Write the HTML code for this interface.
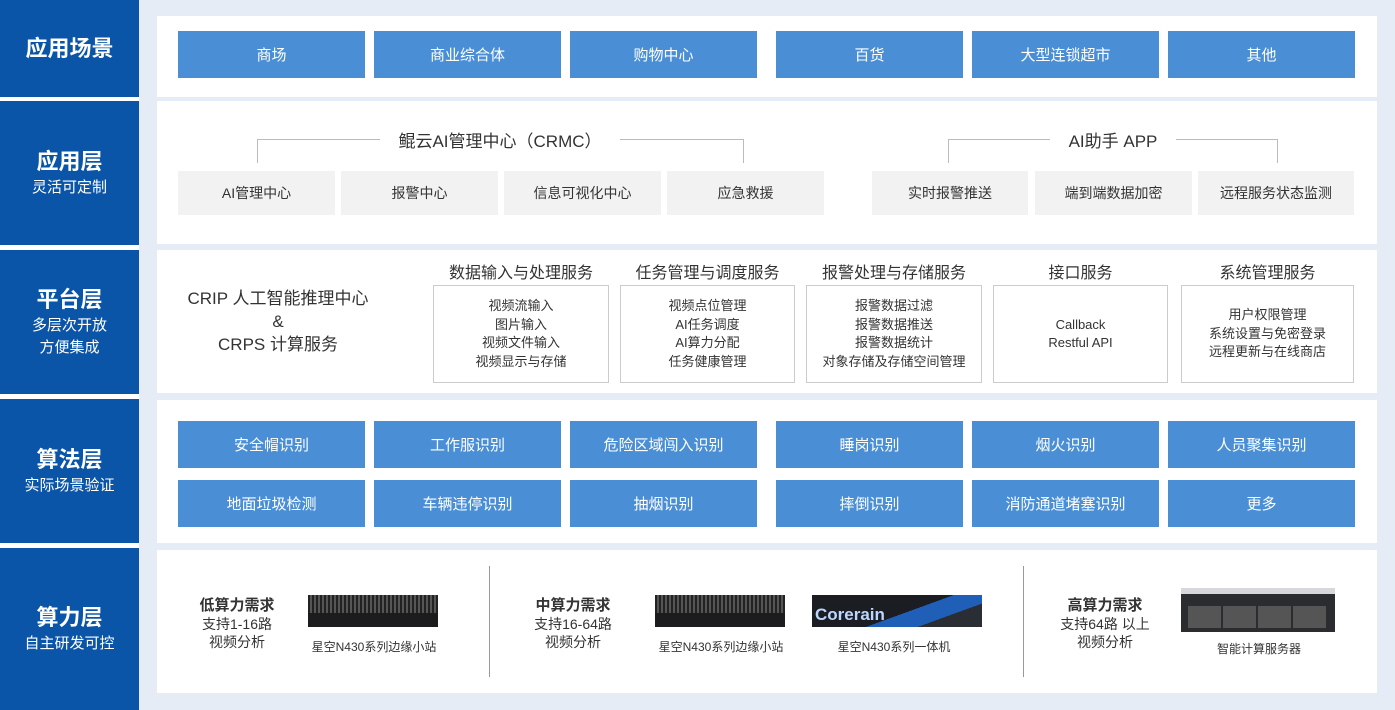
<!DOCTYPE html>
<html><head><meta charset="utf-8"><style>
*{margin:0;padding:0;box-sizing:border-box}
body{width:1395px;height:710px;background:#fff;position:relative;overflow:hidden;font-family:"Liberation Sans","Noto Sans CJK SC",sans-serif;color:#333}
.a{position:absolute}
.bg{left:139px;top:0;width:1256px;height:710px;background:#e5ecf6}
.L{left:0;width:139px;background:#0a55a8;color:#fff;display:flex;flex-direction:column;justify-content:center;align-items:center}
.L b{font-size:22px;line-height:30px}
.L span{font-size:15px;line-height:22px}
.P{background:#fff;left:157px;width:1220px}
.bb{background:#4a8fd6;color:#fff;font-size:15px;display:flex;align-items:center;justify-content:center;height:47px;width:187px}
.gb{background:#f2f2f2;color:#333;font-size:14px;display:flex;align-items:center;justify-content:center;height:44px}
.hd{font-size:16px;text-align:center;color:#333}
.bx{border:1px solid #ccc;top:285px;height:98px;font-size:13px;line-height:18.5px;text-align:center;display:flex;flex-direction:column;justify-content:center}
.br{border:1px solid #bbb;border-bottom:none;height:24px}
.t{font-size:14px;text-align:center;line-height:18px}
.cap{font-size:12px;text-align:center}
</style></head><body>
<div class="a bg"></div>
<div class="a L" style="top:0;height:97px"><b>应用场景</b></div>
<div class="a L" style="top:101px;height:144px"><b>应用层</b><span>灵活可定制</span></div>
<div class="a L" style="top:250px;height:144px"><b>平台层</b><span>多层次开放</span><span>方便集成</span></div>
<div class="a L" style="top:399px;height:144px"><b>算法层</b><span>实际场景验证</span></div>
<div class="a L" style="top:548px;height:162px"><b>算力层</b><span>自主研发可控</span></div>

<div class="a P" style="top:16px;height:81px"></div>
<div class="a bb" style="left:178px;top:31px">商场</div>
<div class="a bb" style="left:374px;top:31px">商业综合体</div>
<div class="a bb" style="left:570px;top:31px">购物中心</div>
<div class="a bb" style="left:776px;top:31px">百货</div>
<div class="a bb" style="left:972px;top:31px">大型连锁超市</div>
<div class="a bb" style="left:1168px;top:31px">其他</div>

<div class="a P" style="top:101px;height:143px"></div>
<div class="a br" style="left:257px;top:139px;width:487px"></div>
<div class="a hd" style="left:380px;top:127px;width:240px;background:#fff;font-size:17px">鲲云AI管理中心（CRMC）</div>
<div class="a br" style="left:948px;top:139px;width:330px"></div>
<div class="a hd" style="left:1050px;top:127px;width:126px;background:#fff;font-size:17px">AI助手 APP</div>
<div class="a gb" style="left:178px;top:171px;width:157px">AI管理中心</div>
<div class="a gb" style="left:341px;top:171px;width:157px">报警中心</div>
<div class="a gb" style="left:504px;top:171px;width:157px">信息可视化中心</div>
<div class="a gb" style="left:667px;top:171px;width:157px">应急救援</div>
<div class="a gb" style="left:872px;top:171px;width:156px">实时报警推送</div>
<div class="a gb" style="left:1035px;top:171px;width:157px">端到端数据加密</div>
<div class="a gb" style="left:1198px;top:171px;width:156px">远程服务状态监测</div>

<div class="a P" style="top:250px;height:143px"></div>
<div class="a" style="left:178px;top:287px;width:200px;text-align:center;font-size:17px;line-height:23px">CRIP 人工智能推理中心<br>&amp;<br>CRPS 计算服务</div>
<div class="a hd" style="left:433px;top:259px;width:176px">数据输入与处理服务</div>
<div class="a hd" style="left:620px;top:259px;width:175px">任务管理与调度服务</div>
<div class="a hd" style="left:806px;top:259px;width:176px">报警处理与存储服务</div>
<div class="a hd" style="left:993px;top:259px;width:175px">接口服务</div>
<div class="a hd" style="left:1181px;top:259px;width:173px">系统管理服务</div>
<div class="a bx" style="left:433px;width:176px">视频流输入<br>图片输入<br>视频文件输入<br>视频显示与存储</div>
<div class="a bx" style="left:620px;width:175px">视频点位管理<br>AI任务调度<br>AI算力分配<br>任务健康管理</div>
<div class="a bx" style="left:806px;width:176px">报警数据过滤<br>报警数据推送<br>报警数据统计<br>对象存储及存储空间管理</div>
<div class="a bx" style="left:993px;width:175px">Callback<br>Restful API</div>
<div class="a bx" style="left:1181px;width:173px">用户权限管理<br>系统设置与免密登录<br>远程更新与在线商店</div>

<div class="a P" style="top:400px;height:143px"></div>
<div class="a bb" style="left:178px;top:421px">安全帽识别</div>
<div class="a bb" style="left:374px;top:421px">工作服识别</div>
<div class="a bb" style="left:570px;top:421px">危险区域闯入识别</div>
<div class="a bb" style="left:776px;top:421px">睡岗识别</div>
<div class="a bb" style="left:972px;top:421px">烟火识别</div>
<div class="a bb" style="left:1168px;top:421px">人员聚集识别</div>
<div class="a bb" style="left:178px;top:480px">地面垃圾检测</div>
<div class="a bb" style="left:374px;top:480px">车辆违停识别</div>
<div class="a bb" style="left:570px;top:480px">抽烟识别</div>
<div class="a bb" style="left:776px;top:480px">摔倒识别</div>
<div class="a bb" style="left:972px;top:480px">消防通道堵塞识别</div>
<div class="a bb" style="left:1168px;top:480px">更多</div>

<div class="a P" style="top:550px;height:143px"></div>
<div class="a" style="left:489px;top:566px;width:1px;height:111px;background:#999"></div>
<div class="a" style="left:1023px;top:566px;width:1px;height:111px;background:#999"></div>

<div class="a t" style="left:187px;top:596px;width:100px"><b style="font-size:15px">低算力需求</b><br>支持1-16路<br>视频分析</div>
<div class="a" style="left:308px;top:595px;width:130px;height:32px;background:repeating-linear-gradient(90deg,#222 0 2px,#555 2px 4px);border-bottom:14px solid #1c1c1e"></div>
<div class="a cap" style="left:305px;top:638px;width:138px">星空N430系列边缘小站</div>

<div class="a t" style="left:523px;top:596px;width:100px"><b style="font-size:15px">中算力需求</b><br>支持16-64路<br>视频分析</div>
<div class="a" style="left:655px;top:595px;width:130px;height:32px;background:repeating-linear-gradient(90deg,#222 0 2px,#555 2px 4px);border-bottom:14px solid #1c1c1e"></div>
<div class="a cap" style="left:652px;top:638px;width:138px">星空N430系列边缘小站</div>
<div class="a" style="left:812px;top:595px;width:170px;height:32px;background:linear-gradient(160deg,#1b1d22 55%,#1f5fb8 55%,#1f5fb8 75%,#2a2d33 75%)"></div>
<div class="a" style="left:815px;top:605px;color:#bcd6ff;font-size:17px;font-weight:bold">Corerain</div>
<div class="a cap" style="left:825px;top:638px;width:138px">星空N430系列一体机</div>

<div class="a t" style="left:1055px;top:596px;width:100px"><b style="font-size:15px">高算力需求</b><br>支持64路 以上<br>视频分析</div>
<div class="a" style="left:1181px;top:588px;width:154px;height:44px;background:#2a2c30;border-top:6px solid #d8d8dc"></div>
<div class="a" style="left:1188px;top:606px;width:140px;height:22px;background:repeating-linear-gradient(90deg,#555 0 33px,#2a2c30 33px 35px)"></div>
<div class="a cap" style="left:1190px;top:640px;width:138px">智能计算服务器</div>
</body></html>
